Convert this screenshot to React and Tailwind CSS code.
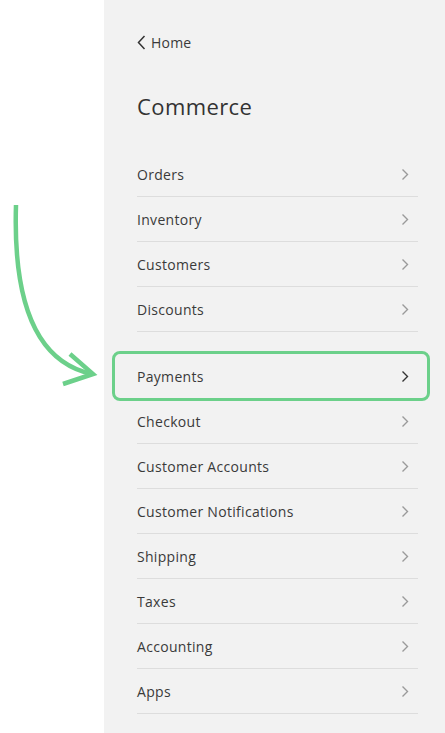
import React from 'react';

const items = [
  'Orders',
  'Inventory',
  'Customers',
  'Discounts',
  'Payments',
  'Checkout',
  'Customer Accounts',
  'Customer Notifications',
  'Shipping',
  'Taxes',
  'Accounting',
  'Apps',
];

function Chevron({ dark }) {
  return (
    <svg width="8" height="13" viewBox="0 0 8 13" fill="none" className={dark ? 'text-[#333]' : 'text-[#9a9a9a]'}>
      <path d="M1.5 1.5l5 5-5 5" stroke="currentColor" strokeWidth="1.4" />
    </svg>
  );
}

export default function App() {
  return (
    <div className="flex w-[445px] h-[733px] bg-white overflow-hidden" style={{ fontFamily: '"Open Sans", sans-serif' }}>
      {/* Arrow column */}
      <div className="w-[104px] shrink-0">
        <svg width="104" height="400" viewBox="0 0 104 400" fill="none" className="block">
          <path d="M16 205 C 13 300, 35 362, 92 374" stroke="#6cd08a" strokeWidth="4.5" />
          <path d="M70 354 L93 374 L63 384" stroke="#6cd08a" strokeWidth="4.5" />
        </svg>
      </div>

      {/* Commerce panel */}
      <div className="flex-1 bg-[#f2f2f2] pl-[33px] pr-[27px] text-[#3a3a3a]">
        <div className="flex items-center gap-[5px] h-[20px] mt-[32px] text-[14px] tracking-[0.2px]">
          <svg width="9" height="15" viewBox="0 0 9 15" fill="none" className="text-[#333]">
            <path d="M7.5 1L1.5 7.5 7.5 14" stroke="currentColor" strokeWidth="1.5" />
          </svg>
          <span>Home</span>
        </div>

        <h1 className="mt-[39px] h-[30px] flex items-center text-[22px] tracking-[0.4px] text-[#333]">Commerce</h1>

        <ul className="mt-[31px]">
          {items.map((item) => {
            const active = item === 'Payments';
            return (
              <li
                key={item}
                className={`relative flex items-center justify-between h-[45px] border-b border-[#dddddd] text-[14px] tracking-[0.3px] pr-[9px] ${active ? 'mt-[22px] border-transparent' : ''}`}
              >
                <span>{item}</span>
                <Chevron dark={active} />
                {active && (
                  <div className="absolute left-[-25px] right-[-12px] top-[-3px] h-[50px] rounded-[8px] border-[3px] border-[#6cd08a]" />
                )}
              </li>
            );
          })}
        </ul>
      </div>
    </div>
  );
}
